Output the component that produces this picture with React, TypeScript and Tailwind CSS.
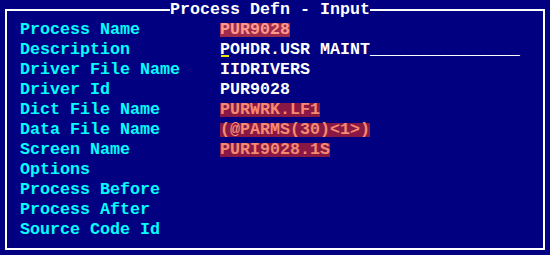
const rows: { label: string; value?: string; kind?: "hot" | "mark" | "plain" | "desc" }[] = [
  { label: "Process Name", value: "PUR9028", kind: "hot" },
  { label: "Description", kind: "desc" },
  { label: "Driver File Name", value: "IIDRIVERS", kind: "plain" },
  { label: "Driver Id", value: "PUR9028", kind: "plain" },
  { label: "Dict File Name", value: "PURWRK.LF1", kind: "mark" },
  { label: "Data File Name", value: "(@PARMS(30)<1>)", kind: "mark" },
  { label: "Screen Name", value: "PURI9028.1S", kind: "mark" },
  { label: "Options" },
  { label: "Process Before" },
  { label: "Process After" },
  { label: "Source Code Id" },
];

const Value = ({ row }: { row: (typeof rows)[number] }) => {
  if (row.kind === "hot")
    return (
      <span className="inline-block h-[14px] leading-[14px] bg-[#a02a4c] text-[#ff9a8a]">{row.value}</span>
    );
  if (row.kind === "mark")
    return (
      <span className="inline-block h-[14px] leading-[14px] bg-[#8a1844] text-[#f48a72]">{row.value}</span>
    );
  if (row.kind === "desc")
    return (
      <span className="relative text-white whitespace-pre">
        POHDR.USR MAINT_______________
        <span className="absolute left-[1px] top-[15px] w-[8px] h-[2px] bg-[#e8e800]" />
      </span>
    );
  if (row.kind === "plain") return <span className="text-white">{row.value}</span>;
  return null;
};

export default function App() {
  return (
    <div
      className="w-[550px] h-[255px] bg-[#000080] pt-[9px] pl-[5px] font-bold text-[16.67px]"
      style={{ fontFamily: '"Liberation Mono", "DejaVu Sans Mono", monospace' }}
    >
      <div className="relative w-[540px] h-[241px] border-2 border-white pt-[9px] pl-[13px]">
        <span className="absolute left-[163px] top-[-11px] h-[20px] leading-[20px] bg-[#000080] text-white whitespace-pre">
          Process Defn - Input
        </span>
        {rows.map((r) => (
          <div key={r.label} className="flex h-[20px] items-center leading-[20px]">
            <span className="w-[200px] shrink-0 text-[#00ffff] whitespace-pre">{r.label}</span>
            <Value row={r} />
          </div>
        ))}
      </div>
    </div>
  );
}
